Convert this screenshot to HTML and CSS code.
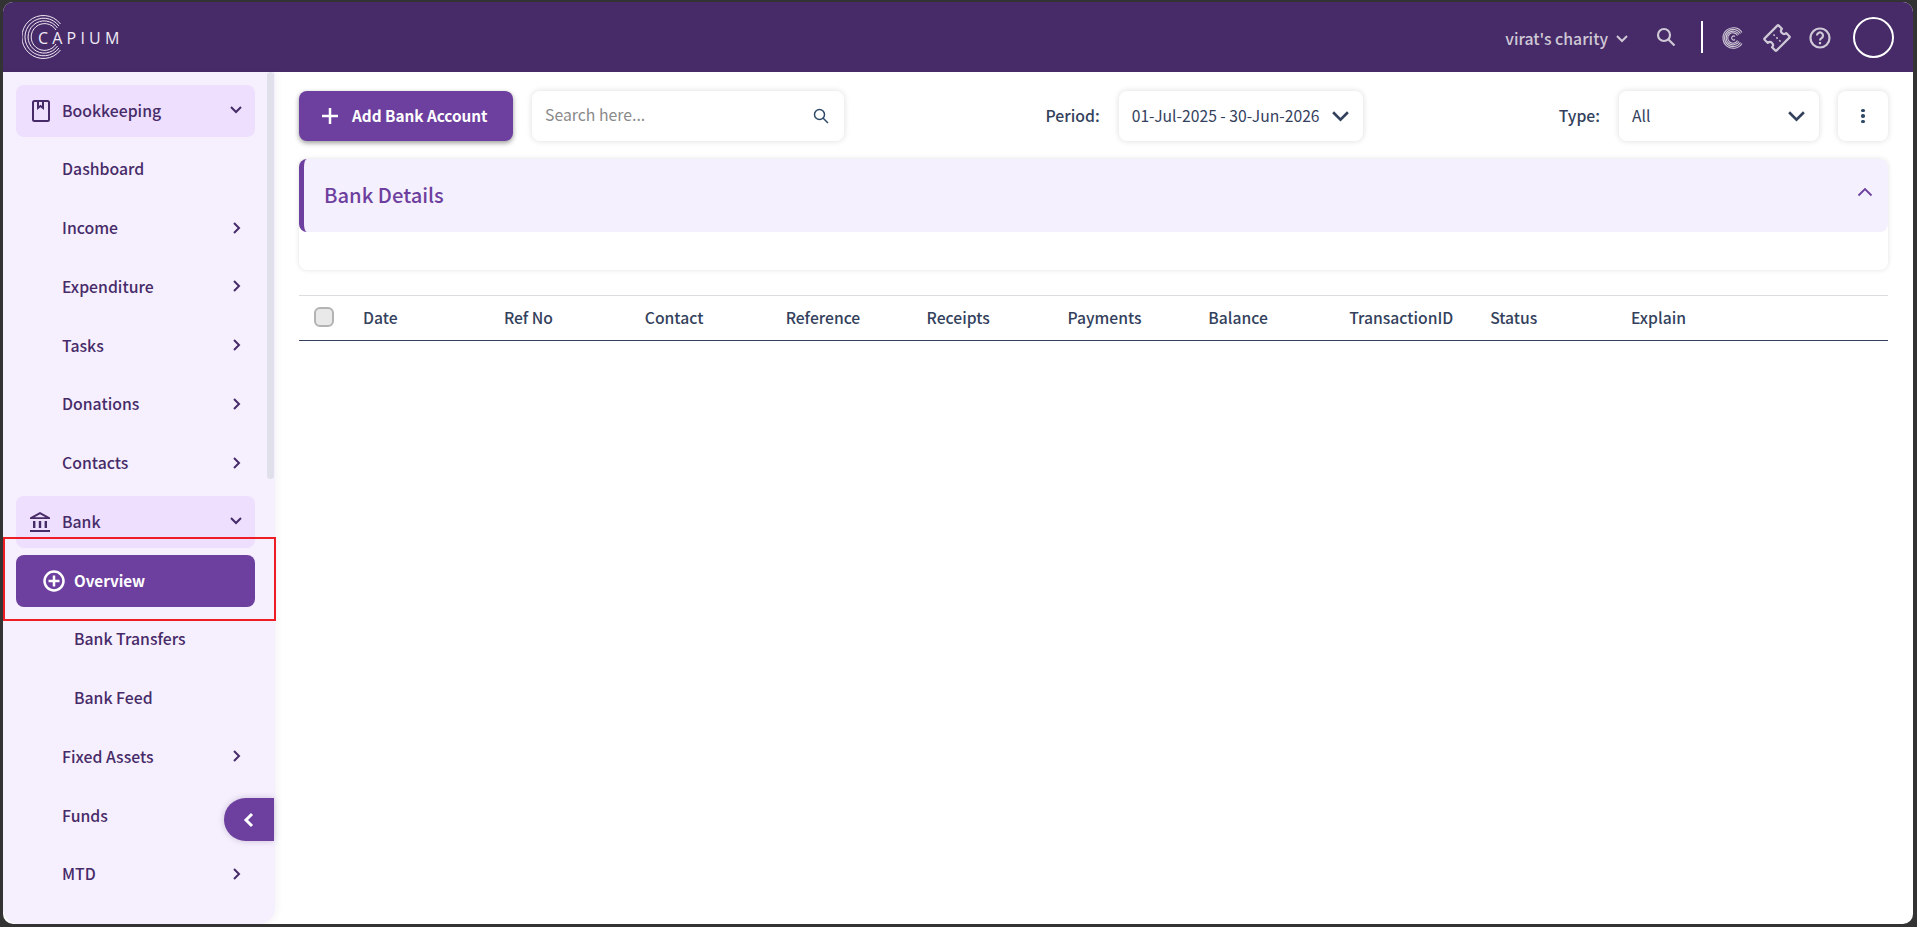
FILE: index.html
```html
<!DOCTYPE html>
<html>
  <head>
    <title>Capium - Bank Overview</title>
    <meta charset="UTF-8" />
    <link rel="stylesheet" href="styles.css">
  </head>

  <body>
    <div class="frame">
      <header class="topbar">
        <div class="logo">
          <svg class="logo_mark" viewBox="0 0 44 44" fill="none" stroke="#f0eaf5" stroke-width="1">
            <path d="M38.5 9a21.500 21.500 0 1 0 0 26" />
            <path d="M37 11a18.800 18.800 0 1 0 0 22" />
            <path d="M35.500 13a16.100 16.100 0 1 0 0 18" />
            <path d="M34 15a13.400 13.400 0 1 0 0 14" />
          </svg>
          <span class="logo_text">CAPIUM</span>
        </div>
        <div class="topbar_right">
          <span class="org">virat's charity</span>
          <svg class="org_arrow" viewBox="0 0 14 10" fill="none" stroke="#cfc8d6" stroke-width="2"><path d="M2 2l5 5 5-5" /></svg>
          <svg class="top_search" viewBox="0 0 20 20" fill="none" stroke="#cfc8d6" stroke-width="2.200"><circle cx="8" cy="8" r="6" /><path d="M12.500 12.500l6 6" /></svg>
          <div class="top_divider"></div>
          <svg class="top_icon" viewBox="0 0 22 22" fill="none" stroke="#cfc8d6" stroke-width="1.100">
            <path d="M20 5.500a10.300 10.300 0 1 0 0 11" />
            <path d="M18.500 6.500a8.600 8.600 0 1 0 0 9" />
            <path d="M17 7.500a6.900 6.900 0 1 0 0 7" />
            <path d="M15.500 8.500a5.200 5.200 0 1 0 0 5" />
            <path d="M13 9.500a2 2 0 1 0 0 3" />
          </svg>
          <svg class="top_icon ticket" viewBox="0 0 28 28" fill="none" stroke="#cfc8d6" stroke-width="2.200" stroke-linejoin="round">
            <g transform="rotate(-45 14 14)">
              <path d="M5 5.500h18a1 1 0 0 1 1 1v4.500a3 3 0 0 0 0 6v4.500a1 1 0 0 1-1 1H5a1 1 0 0 1-1-1V17a3 3 0 0 0 0-6V6.500a1 1 0 0 1 1-1z" />
              <path d="M14 9v1.800M14 13.100v1.800M14 17.200v1.800" stroke-width="1.600" />
            </g>
          </svg>
          <svg class="top_icon help" viewBox="0 0 22 22" fill="none" stroke="#cfc8d6" stroke-width="2.200">
            <circle cx="11" cy="11" r="9.500" />
            <path d="M8 8.500a3 3 0 1 1 4.500 2.600c-1 .6-1.500 1.200-1.500 2.400" />
            <path d="M11 15v2.200" />
          </svg>
          <div class="avatar"></div>
        </div>
      </header>

      <div class="body_row">
        <aside class="sidebar">
          <div class="nav_item nav_open">
            <svg class="nav_icon" viewBox="0 0 18 22" fill="none" stroke="#472b68" stroke-width="2"><rect x="1" y="1" width="16" height="20" rx="1.500" /><path d="M6 1v7l2.500-2 2.500 2V1" /></svg>
            <span class="nav_label">Bookkeeping</span>
            <svg class="nav_arrow" viewBox="0 0 14 10" fill="none" stroke="#472b68" stroke-width="2"><path d="M2 2l5 5 5-5" /></svg>
          </div>
          <div class="nav_item"><span class="nav_label">Dashboard</span></div>
          <div class="nav_item"><span class="nav_label">Income</span><svg class="nav_arrow nav_right" viewBox="0 0 10 14" fill="none" stroke="#472b68" stroke-width="2"><path d="M2 2l5 5-5 5" /></svg></div>
          <div class="nav_item"><span class="nav_label">Expenditure</span><svg class="nav_arrow nav_right" viewBox="0 0 10 14" fill="none" stroke="#472b68" stroke-width="2"><path d="M2 2l5 5-5 5" /></svg></div>
          <div class="nav_item"><span class="nav_label">Tasks</span><svg class="nav_arrow nav_right" viewBox="0 0 10 14" fill="none" stroke="#472b68" stroke-width="2"><path d="M2 2l5 5-5 5" /></svg></div>
          <div class="nav_item"><span class="nav_label">Donations</span><svg class="nav_arrow nav_right" viewBox="0 0 10 14" fill="none" stroke="#472b68" stroke-width="2"><path d="M2 2l5 5-5 5" /></svg></div>
          <div class="nav_item"><span class="nav_label">Contacts</span><svg class="nav_arrow nav_right" viewBox="0 0 10 14" fill="none" stroke="#472b68" stroke-width="2"><path d="M2 2l5 5-5 5" /></svg></div>
          <div class="nav_item nav_open">
            <svg class="nav_icon bank_icon" viewBox="0 0 22 22" fill="#472b68"><path d="M11 1L1 6.500v1.500h20V6.500zM11 3.200l5.500 3H5.500z" fill-rule="evenodd" /><rect x="4" y="10" width="2.400" height="7" /><rect x="9.800" y="10" width="2.400" height="7" /><rect x="15.600" y="10" width="2.400" height="7" /><rect x="1" y="19" width="20" height="2" /></svg>
            <span class="nav_label">Bank</span>
            <svg class="nav_arrow" viewBox="0 0 14 10" fill="none" stroke="#472b68" stroke-width="2"><path d="M2 2l5 5 5-5" /></svg>
          </div>
          <div class="nav_item nav_active">
            <svg class="plus_circle" viewBox="0 0 22 22" fill="none" stroke="#fff" stroke-width="2.500"><circle cx="11" cy="11" r="9.500" /><path d="M11 5.500v11M5.500 11h11" /></svg>
            <span class="nav_label">Overview</span>
          </div>
          <div class="nav_item nav_sub"><span class="nav_label">Bank Transfers</span></div>
          <div class="nav_item nav_sub"><span class="nav_label">Bank Feed</span></div>
          <div class="nav_item"><span class="nav_label">Fixed Assets</span><svg class="nav_arrow nav_right" viewBox="0 0 10 14" fill="none" stroke="#472b68" stroke-width="2"><path d="M2 2l5 5-5 5" /></svg></div>
          <div class="nav_item"><span class="nav_label">Funds</span></div>
          <div class="nav_item"><span class="nav_label">MTD</span><svg class="nav_arrow nav_right" viewBox="0 0 10 14" fill="none" stroke="#472b68" stroke-width="2"><path d="M2 2l5 5-5 5" /></svg></div>

          <div class="scroll_thumb"></div>
          <div class="collapse">
            <svg viewBox="0 0 12 16" fill="none" stroke="#fff" stroke-width="3"><path d="M9 2L3 8l6 6" /></svg>
          </div>
          <!-- red highlight from the screenshot -->
          <div class="highlight"></div>
        </aside>

        <main class="main">
          <div class="toolbar">
            <button class="add_btn">
              <svg viewBox="0 0 16 16" fill="none" stroke="#fff" stroke-width="2.500"><path d="M8 0v16M0 8h16" /></svg>
              <span>Add Bank Account</span>
            </button>
            <div class="box search">
              <span class="placeholder">Search here...</span>
              <svg viewBox="0 0 16 16" fill="none" stroke="#2f4a68" stroke-width="1.500"><circle cx="6.500" cy="6.500" r="5" /><path d="M10 10l5 5" /></svg>
            </div>
            <span class="field_label period_label">Period:</span>
            <div class="box select period">
              <span>01-Jul-2025 - 30-Jun-2026</span>
              <svg viewBox="0 0 18 12" fill="none" stroke="#33415c" stroke-width="2.500"><path d="M2 2l7 7 7-7" /></svg>
            </div>
            <span class="field_label type_label">Type:</span>
            <div class="box select type">
              <span>All</span>
              <svg viewBox="0 0 18 12" fill="none" stroke="#33415c" stroke-width="2.500"><path d="M2 2l7 7 7-7" /></svg>
            </div>
            <div class="box kebab"><i></i><i></i><i></i></div>
          </div>

          <section class="card">
            <div class="card_head">
              <h2>Bank Details</h2>
              <svg viewBox="0 0 16 10" fill="none" stroke="#6d3f9e" stroke-width="1.800"><path d="M1.500 8.500L8 2l6.500 6.500" /></svg>
            </div>
          </section>

          <div class="table_head">
            <div class="check_cell"><div class="check"></div></div>
            <div class="th">Date</div>
            <div class="th">Ref No</div>
            <div class="th">Contact</div>
            <div class="th">Reference</div>
            <div class="th">Receipts</div>
            <div class="th">Payments</div>
            <div class="th">Balance</div>
            <div class="th">TransactionID</div>
            <div class="th">Status</div>
            <div class="th">Explain</div>
          </div>
        </main>
      </div>
    </div>
  </body>
</html>
```

FILE: styles.css
```css
html {
  height: 100%;
  overflow: hidden;
}
body {
  margin: 0;
  height: 100%;
  background: #333333;
  font-family: "Noto Sans CJK JP", "Noto Sans", sans-serif;
  padding: 2px 4px 3px 3px;
  box-sizing: border-box;
}
.frame {
  height: 100%;
  display: flex;
  flex-direction: column;
  background: #fff;
  border-radius: 10px;
  overflow: hidden;
}

/* top bar */
.topbar {
  height: 70px;
  flex: none;
  background: #472b68;
  display: flex;
  align-items: center;
  justify-content: space-between;
  padding: 0 19px 0 19px;
}
.logo {
  display: flex;
  align-items: center;
}
.logo_mark {
  width: 44px;
  height: 44px;
}
.logo_text {
  color: #f0eaf5;
  font-family: "Open Sans", sans-serif;
  font-size: 16px;
  letter-spacing: 4.200px;
  margin: 2px 0 0 -28px;
}
.topbar_right {
  display: flex;
  align-items: center;
}
.org {
  color: #cfc8d6;
  font-size: 15.800px;
  font-weight: 500;
  padding-top: 2px;
}
.org_arrow {
  width: 14px;
  height: 10px;
  margin: 4px 0 0 7px;
}
.top_search {
  width: 20px;
  height: 20px;
  margin: 0 0 0 27px;
}
.top_divider {
  width: 2px;
  height: 32px;
  background: #fff;
  margin-left: 25px;
}
.top_icon {
  width: 22px;
  height: 22px;
  margin: 1px 0 0 19px;
}
.ticket {
  width: 28px;
  height: 28px;
  margin-left: 19px;
}
.help {
  margin-left: 18px;
}
.avatar {
  width: 37px;
  height: 37px;
  border: 2px solid #fff;
  border-radius: 50%;
  margin-left: 22px;
}

.body_row {
  flex: 1;
  display: flex;
  min-height: 0;
}

/* sidebar */
.sidebar {
  width: 272px;
  flex: none;
  position: relative;
  background: #f6f0fe;
  padding: 13px 20px 0 13px;
  box-sizing: border-box;
  border-radius: 0 0 16px 16px;
  box-shadow: 2px 0 6px rgba(71, 43, 104, 0.06);
  display: flex;
  flex-direction: column;
  gap: 6.770px;
}
.nav_item {
  height: 52px;
  flex: none;
  display: flex;
  align-items: center;
  border-radius: 8px;
  padding: 0 12px 2px 46px;
  box-sizing: border-box;
  position: relative;
  color: #472b68;
  font-size: 15.800px;
  font-weight: 500;
}
.nav_open {
  background: #eddffd;
}
.nav_active {
  background: #6d3f9e;
  color: #fff;
  padding-left: 58px;
  font-size: 15.200px;
  font-weight: 700;
}
.nav_sub {
  padding-left: 58px;
}
.nav_icon {
  position: absolute;
  left: 16px;
  top: 15px;
  width: 18px;
  height: 22px;
}
.bank_icon {
  left: 13px;
  width: 22px;
}
.plus_circle {
  position: absolute;
  left: 27px;
  top: 15px;
  width: 22px;
  height: 22px;
}
.nav_arrow {
  margin-left: auto;
  width: 14px;
  height: 10px;
}
.nav_right {
  width: 10px;
  height: 14px;
  margin-right: 1px;
}
.scroll_thumb {
  position: absolute;
  top: 0;
  right: 1px;
  width: 7px;
  height: 407px;
  background: #dfe0ea;
  border-radius: 4px;
}
.collapse {
  position: absolute;
  right: 1px;
  top: 726px;
  width: 50px;
  height: 43px;
  background: #6d3f9e;
  border-radius: 22px 0 0 22px;
  box-shadow: 0 0 6px rgba(71, 43, 104, 0.25);
  display: flex;
  align-items: center;
  justify-content: center;
}
.collapse svg {
  width: 12px;
  height: 16px;
}
.highlight {
  position: absolute;
  left: 0;
  top: 465px;
  width: 273px;
  height: 84px;
  border: 2.500px solid #ee1c25;
  box-sizing: border-box;
}

/* main */
.main {
  flex: 1;
  min-width: 0;
  padding: 19px 25px 0 24px;
}
.toolbar {
  display: flex;
  align-items: center;
  height: 50px;
}
.add_btn {
  width: 214px;
  height: 50px;
  border: 0;
  border-radius: 8px;
  background: #6d3f9e;
  box-shadow: 0 2px 5px rgba(0, 0, 0, 0.4);
  color: #fff;
  font-family: inherit;
  font-size: 15.300px;
  font-weight: 700;
  display: flex;
  align-items: center;
  padding: 0 0 0 23px;
  gap: 14px;
}
.add_btn span {
  padding-bottom: 2px;
}
.add_btn svg {
  width: 16px;
  height: 16px;
}
.box {
  height: 50px;
  background: #fff;
  border-radius: 8px;
  box-shadow: 0 0 6px rgba(0, 0, 0, 0.14);
  display: flex;
  align-items: center;
  box-sizing: border-box;
}
.search {
  width: 312px;
  margin-left: 19px;
  padding: 0 15px 0 13px;
  justify-content: space-between;
}
.placeholder {
  color: #8a8a8a;
  font-size: 15.800px;
  margin-top: -3px;
}
.search svg {
  width: 16px;
  height: 16px;
}
.field_label {
  color: #33415c;
  font-size: 15.800px;
  font-weight: 500;
  padding-bottom: 2px;
}
.period_label {
  margin-left: auto;
}
.period {
  width: 244px;
  margin-left: 19px;
  padding: 0 13px 0 13px;
  color: #33415c;
  font-size: 15.700px;
  justify-content: space-between;
}
.select span {
  padding-bottom: 2px;
}
.select svg {
  width: 19px;
  height: 13px;
}
.type_label {
  margin-left: 196px;
}
.type {
  width: 200px;
  margin-left: 19px;
  padding: 0 13px;
  color: #33415c;
  font-size: 15.700px;
  justify-content: space-between;
}
.kebab {
  width: 50px;
  margin-left: 19px;
  flex-direction: column;
  justify-content: center;
  gap: 2px;
}
.kebab i {
  width: 3.500px;
  height: 3.500px;
  background: #2f4a68;
  border-radius: 50%;
}

.card {
  margin-top: 18px;
  height: 111px;
  border-radius: 8px;
  box-shadow: 0 0 5px rgba(0, 0, 0, 0.12);
}
.card_head {
  height: 73px;
  background: #f5f0fd;
  border-left: 5px solid #6d3f9e;
  border-radius: 8px;
  display: flex;
  align-items: center;
  justify-content: space-between;
  padding: 0 15px 2px 20px;
  box-sizing: border-box;
}
.card_head h2 {
  margin: 0;
  color: #6d3f9e;
  font-size: 20.200px;
  font-weight: 500;
}
.card_head svg {
  width: 16px;
  height: 10px;
  margin-bottom: 6px;
}

.table_head {
  margin-top: 25px;
  height: 46px;
  box-sizing: border-box;
  padding-bottom: 2px;
  border-top: 1px solid #dcdce0;
  border-bottom: 1px solid #33415c;
  display: grid;
  grid-template-columns: 64px repeat(10, 140.900px);
  align-items: center;
  color: #33415c;
  font-size: 15.700px;
  font-weight: 500;
}
.check_cell {
  padding-left: 15px;
}
.check {
  width: 20px;
  height: 20px;
  box-sizing: border-box;
  background: #e9e9e9;
  border: 2px solid #b3b3b3;
  border-radius: 6px;
}
```
